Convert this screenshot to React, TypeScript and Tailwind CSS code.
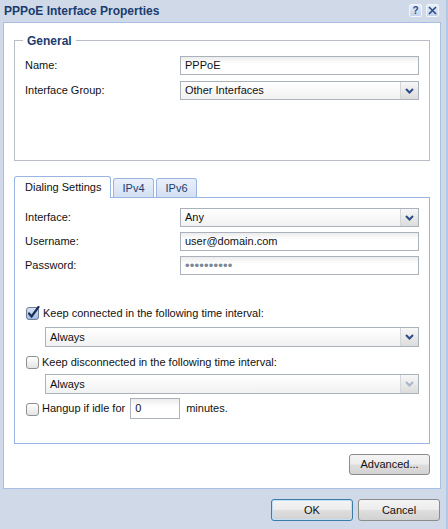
import React from 'react';

const font = "font-['Liberation_Sans',Arial,sans-serif]";

function Chevron({ muted = false }: { muted?: boolean }) {
  return (
    <svg width="9" height="6" viewBox="0 0 9 6">
      <path d="M1 1 L4.5 4.5 L8 1" fill="none" stroke={muted ? '#a9b6cc' : '#2d4c86'} strokeWidth="2" />
    </svg>
  );
}

function TextBox({ children, className = '' }: { children?: React.ReactNode; className?: string }) {
  return (
    <div
      className={`flex items-center h-[19px] border border-[#abb2bc] bg-linear-to-b from-[#ececec] to-white to-40% pl-[4px] text-[11px] text-[#111] ${className}`}
    >
      {children}
    </div>
  );
}

function Select({ value, muted = false, className = '' }: { value: string; muted?: boolean; className?: string }) {
  return (
    <div className={`flex h-[19px] border border-[#abb2bc] bg-linear-to-b from-white to-[#f1f1f1] ${className}`}>
      <div className="flex-1 flex items-center pl-[4px] text-[11px] text-[#111]">{value}</div>
      <div className="w-[18px] flex items-center justify-center border-l border-[#d3d6da] bg-linear-to-b from-[#f7f7f7] to-[#dcdcdc]">
        <Chevron muted={muted} />
      </div>
    </div>
  );
}

function CheckBox({ checked = false }: { checked?: boolean }) {
  if (checked) {
    return (
      <svg width="14" height="14" viewBox="0 0 14 14" className="ml-[1px] shrink-0">
        <defs>
          <linearGradient id="cb" x1="0" y1="0" x2="0" y2="1">
            <stop offset="0" stopColor="#dbe6f7" />
            <stop offset="1" stopColor="#9fb9e2" />
          </linearGradient>
        </defs>
        <rect x="0.5" y="1.5" width="12" height="12" rx="2.5" fill="url(#cb)" stroke="#6f7f98" />
        <path d="M3 7.5 L5.6 10.5 L12.5 1" fill="none" stroke="#1b2f57" strokeWidth="2.2" strokeLinecap="round" />
      </svg>
    );
  }
  return (
    <div className="ml-[1px] mt-[1px] w-[13px] h-[13px] shrink-0 rounded-[3px] border border-[#8d9095] bg-linear-to-b from-white to-[#e4e4e4]" />
  );
}

function Button({ children, primary = false, className = '' }: { children: React.ReactNode; primary?: boolean; className?: string }) {
  return (
    <div
      className={`flex items-center justify-center rounded-[3px] border text-[11px] text-[#111] bg-[linear-gradient(to_bottom,#f4f4f4_0%,#ececec_48%,#dedede_52%,#d2d2d2_100%)] ${
        primary ? 'border-[#3d7bad] shadow-[inset_0_0_0_1px_#bfe0f5]' : 'border-[#8c8c8c]'
      } ${className}`}
    >
      {children}
    </div>
  );
}

export default function App() {
  return (
    <div className={`w-[448px] h-[529px] bg-[#cfd9e8] border-r-2 border-[#b4c7e7] flex flex-col ${font}`}>
      {/* Title bar */}
      <div className="h-[22px] flex items-center pl-[4px] pr-[7px]">
        <span className="text-[12px] font-bold text-[#1b3c6e]">PPPoE Interface Properties</span>
        <div className="ml-auto flex gap-[4px] -mt-[1px]">
          <div className="w-[13px] h-[13px] rounded-[2px] border border-[#f2f6fc] bg-linear-to-b from-[#e9eff9] to-[#c3d2ea] flex items-center justify-center text-[10px] font-bold text-[#2a4c8a] leading-none">
            ?
          </div>
          <div className="w-[13px] h-[13px] rounded-[2px] border border-[#f2f6fc] bg-linear-to-b from-[#e9eff9] to-[#c3d2ea] flex items-center justify-center">
            <svg width="9" height="9" viewBox="0 0 9 9">
              <path d="M1 1 L8 8 M8 1 L1 8" stroke="#2a4c8a" strokeWidth="1.6" />
            </svg>
          </div>
        </div>
      </div>

      {/* Main panel */}
      <div className="ml-[3px] w-[438px] h-[467px] bg-white border border-[#a9bfe1] px-[10px] pt-[17px] flex flex-col">
        {/* General */}
        <div className="relative h-[121px] border border-[#b9bdc6] px-[10px] pt-[15px]">
          <span className="absolute -top-[9px] left-[8px] bg-white px-[4px] text-[12px] font-bold text-[#1b3c6e]">
            General
          </span>
          <div className="grid grid-cols-[155px_1fr] gap-y-[6px] items-center text-[11px] text-[#111]">
            <span>Name:</span>
            <TextBox>PPPoE</TextBox>
            <span>Interface Group:</span>
            <Select value="Other Interfaces" />
          </div>
        </div>

        {/* Tabs */}
        <div className="mt-[15px] h-[21px] flex items-end gap-[2px] text-[11px]">
          <div className="relative z-10 -mb-px h-[22px] w-[97px] flex items-center pl-[10px] border border-b-0 border-[#9ab5e2] rounded-t-[3px] bg-white text-[#111]">
            Dialing Settings
          </div>
          <div className="h-[19px] w-[41px] flex items-center justify-center border border-b-0 border-[#9ab5e2] rounded-t-[3px] bg-linear-to-b from-[#eaf0fa] to-[#d3e0f3] text-[#1b3c6e]">
            IPv4
          </div>
          <div className="h-[19px] w-[41px] flex items-center justify-center border border-b-0 border-[#9ab5e2] rounded-t-[3px] bg-linear-to-b from-[#eaf0fa] to-[#d3e0f3] text-[#1b3c6e]">
            IPv6
          </div>
        </div>
        <div className="h-[247px] border border-[#9ab5e2] px-[10px] pt-[10px] text-[11px] text-[#111]">
          <div className="grid grid-cols-[155px_1fr] gap-y-[5px] items-center">
            <span>Interface:</span>
            <Select value="Any" />
            <span>Username:</span>
            <TextBox>user@domain.com</TextBox>
            <span>Password:</span>
            <TextBox>
              <span className="text-[13px] tracking-[0.2px] text-[#7b8797]">••••••••••</span>
            </TextBox>
          </div>

          <div className="mt-[31px] h-[14px] flex items-center gap-[3px]">
            <CheckBox checked />
            <span>Keep connected in the following time interval:</span>
          </div>
          <Select value="Always" className="mt-[7px] ml-[20px] h-[20px]" />

          <div className="mt-[8px] h-[14px] flex items-center gap-[3px]">
            <CheckBox />
            <span>Keep disconnected in the following time interval:</span>
          </div>
          <Select value="Always" muted className="mt-[5px] ml-[20px] h-[20px]" />

          <div className="mt-[4px] h-[21px] flex items-center gap-[3px]">
            <CheckBox />
            <span>Hangup if idle for</span>
            <TextBox className="ml-[2px] w-[50px] h-[21px]">0</TextBox>
            <span className="ml-[3px]">minutes.</span>
          </div>
        </div>

        <Button className="mt-[10px] self-end w-[81px] h-[21px]">Advanced...</Button>
      </div>

      {/* Footer buttons */}
      <div className="mt-[10px] flex justify-end gap-[5px] pr-[6px]">
        <Button primary className="w-[82px] h-[22px]">OK</Button>
        <Button className="w-[82px] h-[22px]">Cancel</Button>
      </div>
    </div>
  );
}
